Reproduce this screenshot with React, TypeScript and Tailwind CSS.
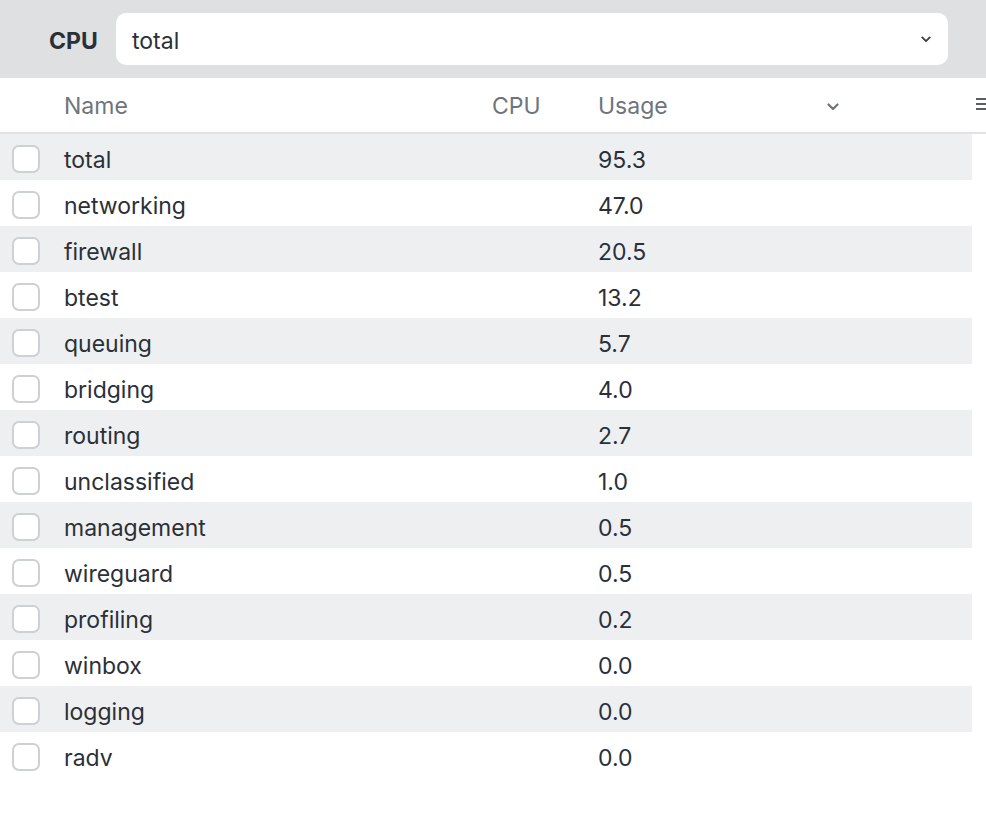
import { useState } from 'react'

const rows = [
  { name: 'total', usage: '95.3' },
  { name: 'networking', usage: '47.0' },
  { name: 'firewall', usage: '20.5' },
  { name: 'btest', usage: '13.2' },
  { name: 'queuing', usage: '5.7' },
  { name: 'bridging', usage: '4.0' },
  { name: 'routing', usage: '2.7' },
  { name: 'unclassified', usage: '1.0' },
  { name: 'management', usage: '0.5' },
  { name: 'wireguard', usage: '0.5' },
  { name: 'profiling', usage: '0.2' },
  { name: 'winbox', usage: '0.0' },
  { name: 'logging', usage: '0.0' },
  { name: 'radv', usage: '0.0' },
]

function Chevron({ className }: { className?: string }) {
  return (
    <svg viewBox="0 0 12 8" className={className} fill="none" stroke="currentColor" strokeWidth="2.2" strokeLinecap="round" strokeLinejoin="round">
      <path d="M1.5 1.5 6 6l4.5-4.5" />
    </svg>
  )
}

export default function App() {
  const [checked, setChecked] = useState<Record<string, boolean>>({})

  return (
    <div className="w-[986px] h-[832px] bg-white overflow-hidden text-[#2b3038]" style={{ fontFamily: 'Inter, "Noto Sans", sans-serif' }}>
      <div className="h-[78px] bg-[#dfe0e2] flex items-center pl-[49px] pr-[38px] gap-4">
        <span className="text-[23px] font-bold w-[51px] pt-[4px]">CPU</span>
        <div className="flex-1 h-[52px] bg-white rounded-[10px] flex items-center pl-4 pr-[17px]">
          <span className="flex-1 text-[23px] pt-[4px]">total</span>
          <Chevron className="w-[10px] h-[7px] text-[#3a3f47]" />
        </div>
      </div>

      <div className="relative h-[56px] flex items-center border-b-2 border-[#e1e2e4] text-[23px] text-[#6e747c]">
        <div className="w-[64px]" />
        <div className="w-[428px] pt-[2px]">Name</div>
        <div className="w-[106px] pt-[2px]">CPU</div>
        <div className="w-[242px] flex items-center justify-between">
          <span className="pt-[2px]">Usage</span>
          <Chevron className="w-[12px] h-[8px] mr-[1px] mt-[3px]" />
        </div>
        <div className="absolute left-[976px] top-[20px] flex flex-col gap-[3px]">
          <div className="w-[14px] h-[2px] bg-[#5a5f66]" />
          <div className="w-[14px] h-[2px] bg-[#5a5f66]" />
          <div className="w-[14px] h-[2px] bg-[#5a5f66]" />
        </div>
      </div>

      <div className="w-[972px]">
        {rows.map((r, i) => (
          <div key={r.name} className={`h-[46px] flex items-center text-[23px] ${i % 2 === 0 ? 'bg-[#eeeff1]' : 'bg-white'}`}>
            <div className="w-[64px] pl-3 pt-[3px]">
              <button
                onClick={() => setChecked({ ...checked, [r.name]: !checked[r.name] })}
                className="block w-[28px] h-[28px] rounded-[7px] border-2 border-[#cdd0d4] bg-white"
              />
            </div>
            <div className="w-[534px] pt-[6px]">{r.name}</div>
            <div className="pt-[6px]">{r.usage}</div>
          </div>
        ))}
      </div>
    </div>
  )
}
